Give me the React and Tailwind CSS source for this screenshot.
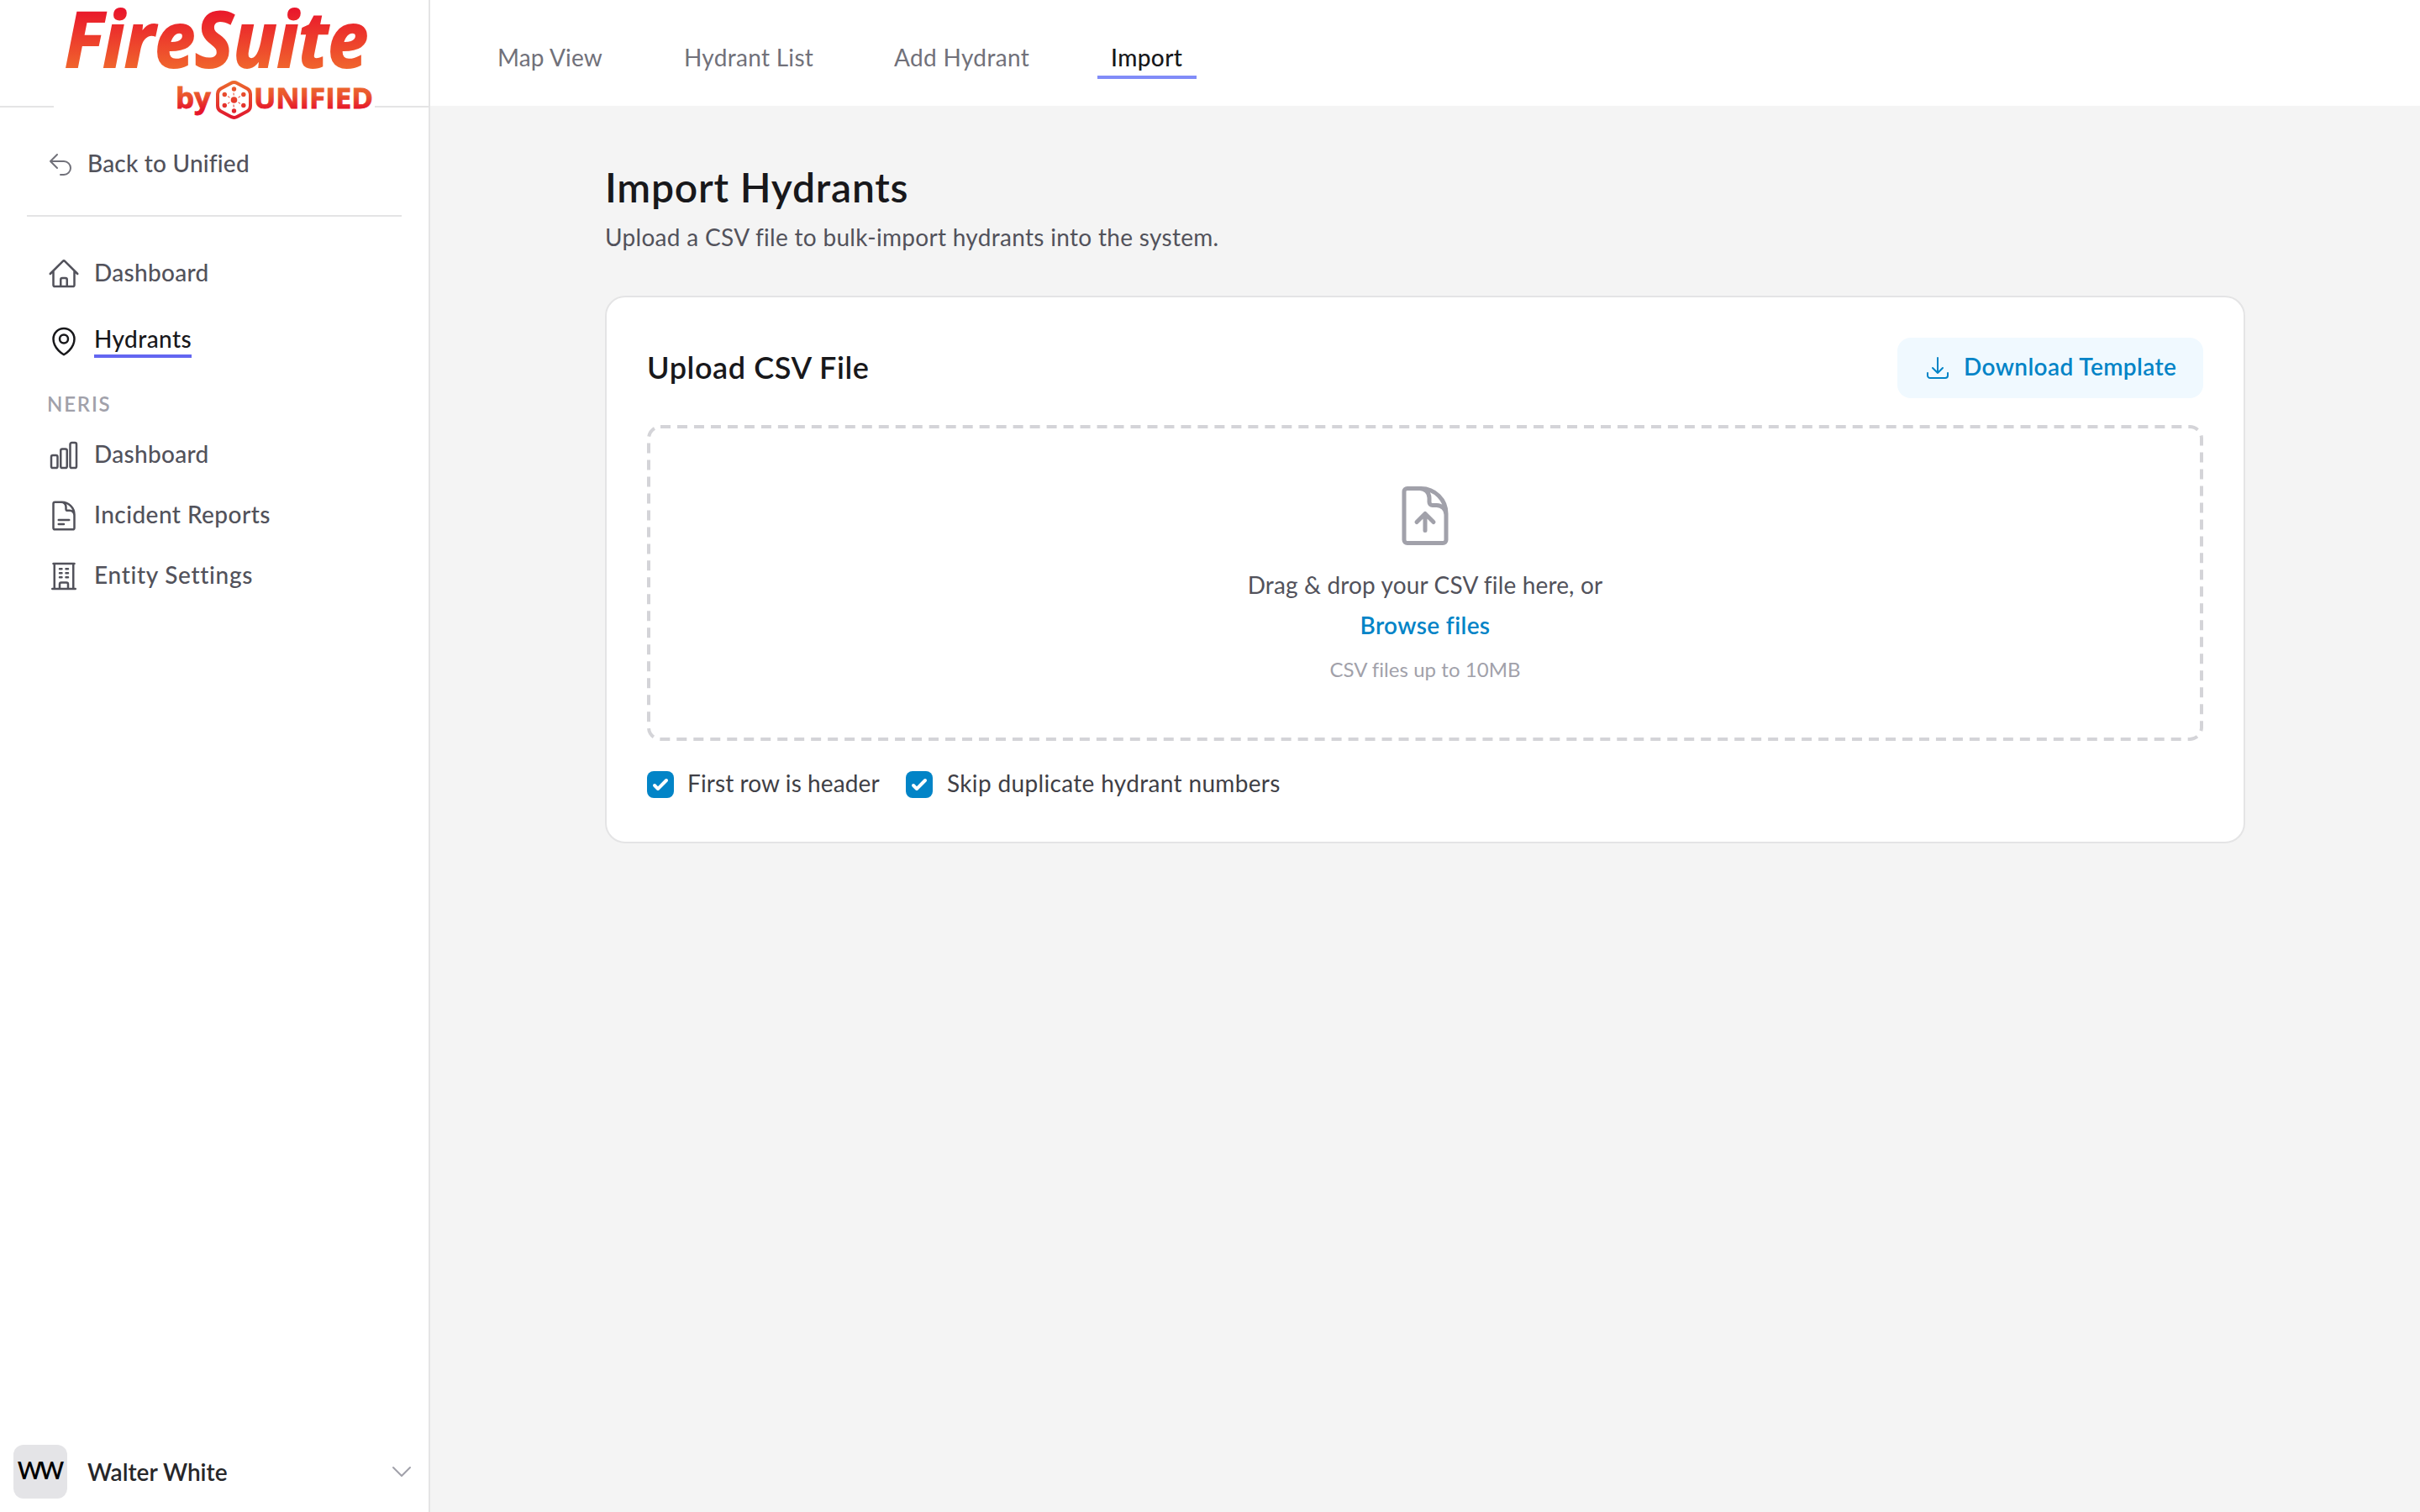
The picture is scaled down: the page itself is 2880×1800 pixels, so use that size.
import React, { useState } from "react";
import {
  HiOutlineArrowDownTray,
  HiOutlineArrowUturnLeft,
  HiOutlineBuildingOffice,
  HiOutlineChartBar,
  HiOutlineChevronDown,
  HiOutlineDocumentArrowUp,
  HiOutlineDocumentText,
  HiOutlineHome,
  HiOutlineMapPin,
} from "react-icons/hi2";

const mainLinks = [
  { label: "Dashboard", icon: HiOutlineHome, tracking: "tracking-[0.3px]" },
  { label: "Hydrants", icon: HiOutlineMapPin, tracking: "tracking-[0.4px]", active: true },
];

const nerisLinks = [
  { label: "Dashboard", icon: HiOutlineChartBar, tracking: "tracking-[0.3px]" },
  { label: "Incident Reports", icon: HiOutlineDocumentText, tracking: "tracking-[0.45px]" },
  { label: "Entity Settings", icon: HiOutlineBuildingOffice, tracking: "tracking-[0.7px]" },
];

const tabs = [
  { label: "Map View", style: "w-[158px] tracking-[0.15px]" },
  { label: "Hydrant List", style: "w-[186px] tracking-[0.3px]" },
  { label: "Add Hydrant", style: "w-[194px] tracking-[0.35px]" },
  { label: "Import", style: "w-[118px] tracking-[0.4px]", active: true },
];

const Logo = () => (
  <svg
    className="absolute left-16 top-0 h-[156px] w-[382px] bg-white"
    viewBox="64 0 382 156"
  >
    <defs>
      <linearGradient id="fire" gradientUnits="userSpaceOnUse" x1="0" y1="10" x2="0" y2="80">
        <stop offset="0" stopColor="#e9152b" />
        <stop offset="1" stopColor="#f0632d" />
      </linearGradient>
      <linearGradient id="unified" gradientUnits="userSpaceOnUse" x1="0" y1="103" x2="0" y2="130">
        <stop offset="0" stopColor="#ec682d" />
        <stop offset="0.4" stopColor="#ea522d" />
        <stop offset="1" stopColor="#e6152a" />
      </linearGradient>
      <linearGradient id="badge" gradientUnits="userSpaceOnUse" x1="0" y1="96" x2="0" y2="142">
        <stop offset="0" stopColor="#ec6a2d" />
        <stop offset="1" stopColor="#e0142e" />
      </linearGradient>
    </defs>
    <text
      x="77"
      y="79.5"
      fill="url(#fire)"
      stroke="url(#fire)"
      strokeWidth="2"
      fontSize="91"
      textLength="361"
      lengthAdjust="spacingAndGlyphs"
      className="font-['Open_Sans'] font-bold italic"
    >
      FireSuite
    </text>
    <g
      fill="url(#unified)"
      stroke="url(#unified)"
      strokeWidth="0.8"
      className="font-['Open_Sans'] font-bold"
    >
      <text x="209" y="128.5" fontSize="34" textLength="42" lengthAdjust="spacingAndGlyphs">
        by
      </text>
      <text x="302" y="128.5" fontSize="34" textLength="142" lengthAdjust="spacingAndGlyphs">
        UNIFIED
      </text>
    </g>
    <g fill="url(#badge)">
      <circle cx="278.5" cy="119" r="3.8" />
      <circle cx="278.5" cy="106" r="2.7" />
      <circle cx="278.5" cy="132" r="2.7" />
      <circle cx="267.3" cy="112.5" r="2.7" />
      <circle cx="289.8" cy="112.5" r="2.7" />
      <circle cx="267.3" cy="125.5" r="2.7" />
      <circle cx="289.8" cy="125.5" r="2.7" />
    </g>
    <g fill="none" stroke="url(#badge)">
      <path
        strokeWidth="4"
        strokeLinejoin="round"
        d="M274.5 99.2q4-2.2 8 0l11.7 6.3q3.8 2.2 3.8 6.5v14q0 4.3-3.8 6.5l-11.7 6.3q-4 2.2-8 0l-11.7-6.3q-3.8-2.2-3.8-6.5v-14q0-4.3 3.8-6.5z"
      />
      <path
        strokeWidth="1"
        d="M278 110.5l.2 3M278 124.5l.2 3M271 114.7l2.5 1.4M286 114.7l-2.5 1.4M271 123.3l2.5-1.4M286 123.3l-2.5-1.4"
      />
    </g>
  </svg>
);

const SideLink = ({ link, height }) => {
  const Icon = link.icon;
  return (
    <a
      href="#"
      className={`flex items-center gap-4 px-14 font-medium ${height} ${
        link.active ? "text-[#18181b]" : "text-[#52525b]"
      }`}
    >
      <Icon className="size-10 shrink-0" />
      <span
        className={`whitespace-nowrap border-b-4 leading-10 ${link.tracking} ${
          link.active ? "mb-[3px] h-[43px] border-[#6366f1]" : "border-transparent"
        }`}
      >
        {link.label}
      </span>
    </a>
  );
};

const Sidebar = () => (
  <aside className="flex w-[512px] shrink-0 flex-col border-r-2 border-[#e4e4e5] bg-white">
    <div className="relative h-32 shrink-0 border-b-2 border-[#e4e4e5]">
      <Logo />
    </div>

    <div className="mx-8 flex h-[130px] items-center gap-4 border-b-2 border-[#e4e4e5] px-6 pt-2 font-medium text-[#52525b]">
      <HiOutlineArrowUturnLeft className="size-8 text-[#71717a]" />
      <span className="mb-1 leading-10 tracking-[0.2px]">Back to Unified</span>
    </div>

    <nav className="pt-7">
      {mainLinks.map((link) => (
        <SideLink key={link.label} link={link} height="h-20" />
      ))}
      <h3 className="mb-[5px] mt-3.5 pl-14 text-2xl font-semibold leading-[41px] tracking-[1.8px] text-[#a1a1aa]">
        NERIS
      </h3>
      {nerisLinks.map((link) => (
        <SideLink key={link.label} link={link} height="h-18" />
      ))}
    </nav>

    {/* Current user */}
    <div className="mt-auto flex items-center p-4">
      <div className="flex size-16 items-center justify-center rounded-xl bg-[#e4e4e7] pb-1 pr-0.5 font-semibold tracking-[-3px] text-black">
        WW
      </div>
      <span className="ml-6 font-semibold leading-10 text-[#27272a]">Walter White</span>
      <HiOutlineChevronDown className="ml-auto size-8 text-[#a1a1aa]" />
    </div>
  </aside>
);

const TopNav = () => (
  <header className="h-[126px] bg-white pl-16">
    <nav className="flex gap-16 pt-12">
      {tabs.map((tab) => (
        <a
          key={tab.label}
          href="#"
          className={`whitespace-nowrap border-b-4 px-4 pb-0.5 leading-10 ${tab.style} ${
            tab.active
              ? "border-[#818cf8] font-medium text-[#18181b]"
              : "border-transparent text-[#71717a]"
          }`}
        >
          {tab.label}
        </a>
      ))}
    </nav>
  </header>
);

const Checkbox = ({ label, checked, onChange, tracking }) => (
  <label className="flex items-center gap-4 text-[#3f3f46]">
    <input type="checkbox" className="peer sr-only" checked={checked} onChange={onChange} />
    <span className="flex size-8 items-center justify-center rounded-lg bg-[#0284c7]">
      {checked && (
        <svg className="size-8" viewBox="0 0 16 16" fill="white">
          <path d="M12.207 4.793a1 1 0 010 1.414l-5 5a1 1 0 01-1.414 0l-2-2a1 1 0 011.414-1.414L6.5 9.086l4.293-4.293a1 1 0 011.414 0z" />
        </svg>
      )}
    </span>
    <span className={`-mt-1 whitespace-nowrap leading-10 ${tracking}`}>{label}</span>
  </label>
);

export default function App() {
  const [hasHeader, setHasHeader] = useState(true);
  const [skipDuplicates, setSkipDuplicates] = useState(true);

  return (
    <div className="flex h-screen w-full overflow-hidden bg-[#f4f4f4] font-['Lato',sans-serif] text-[28px]">
      <Sidebar />

      <div className="flex-1">
        <TopNav />

        <main className="px-52 pt-[65px]">
          <div className="w-[1952px]">
            <h1 className="text-5xl font-semibold leading-16 tracking-[0.8px] text-[#18181b]">
              Import Hydrants
            </h1>
            <p className="mt-[7px] leading-10 tracking-[0.31px] text-[#52525b]">
              Upload a CSV file to bulk-import hydrants into the system.
            </p>

            <section className="mt-[50px] rounded-3xl border-2 border-[#e4e4e5] bg-white p-12">
              <div className="flex h-18 items-center justify-between">
                <h2 className="mb-0.5 text-4xl font-semibold leading-12 tracking-[0.6px] text-[#18181b]">
                  Upload CSV File
                </h2>
                <button className="flex h-18 w-[364px] items-center gap-[15px] rounded-2xl bg-[#f0f9ff] pl-8 font-semibold text-[#0284c7]">
                  <HiOutlineArrowDownTray className="size-8" />
                  <span className="mb-1 whitespace-nowrap leading-10 tracking-[0.4px]">
                    Download Template
                  </span>
                </button>
              </div>

              {/* Drop zone */}
              <div className="relative mt-8 flex h-[376px] flex-col items-center pt-[68px]">
                <svg className="absolute inset-0 size-full" fill="none">
                  <rect
                    x="2"
                    y="2"
                    width="1848"
                    height="372"
                    rx="14"
                    stroke="#d4d4d8"
                    strokeWidth="4"
                    strokeDasharray="12 7.982"
                  />
                </svg>
                <HiOutlineDocumentArrowUp className="size-20 text-[#a1a1aa]" />
                <p className="mt-[22px] leading-10 tracking-[0.15px] text-[#52525b]">
                  Drag &amp; drop your CSV file here, or
                </p>
                <button className="mt-2 font-semibold leading-10 tracking-[0.37px] text-[#0284c7]">
                  Browse files
                </button>
                <p className="mt-[17px] text-2xl leading-8 tracking-[0.05px] text-[#a1a1aa]">
                  CSV files up to 10MB
                </p>
              </div>

              <div className="mt-8 flex h-10 items-center gap-8">
                <Checkbox
                  label="First row is header"
                  checked={hasHeader}
                  onChange={() => setHasHeader(!hasHeader)}
                  tracking="w-[228px] tracking-[0.1px]"
                />
                <Checkbox
                  label="Skip duplicate hydrant numbers"
                  checked={skipDuplicates}
                  onChange={() => setSkipDuplicates(!skipDuplicates)}
                  tracking="pl-px tracking-[0.34px]"
                />
              </div>
            </section>
          </div>
        </main>
      </div>
    </div>
  );
}
